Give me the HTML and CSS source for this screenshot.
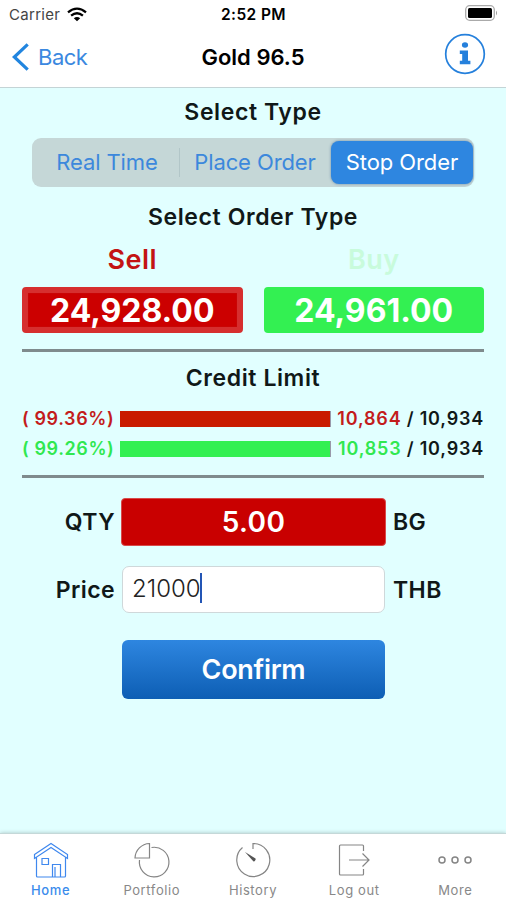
FILE: index.html
```html
<!DOCTYPE html>
<html lang="en">
<head>
<meta charset="utf-8">
<title>Gold 96.5</title>
<link rel="stylesheet" href="styles.css">
</head>
<body>
<div class="app">
  <header class="top">
    <div class="status">
      <div class="carrier"><span>Carrier</span>
        <svg class="wifi" width="20" height="15" viewBox="0 0 20 15" fill="none" stroke="#000" stroke-width="2.3"><path d="M1 5.3Q10-2 19 5.3M4.1 8.7Q10 3.9 15.9 8.7"/><path d="M6.8 11.2Q10 8.6 13.2 11.2L10 14.3Z" fill="#000" stroke="none"/></svg>
      </div>
      <span class="clock">2:52 PM</span>
      <svg class="battery" width="33" height="16" viewBox="0 0 33 16"><rect x=".7" y=".7" width="28.6" height="14.6" rx="4" fill="#fff" stroke="#aaa" stroke-width="1.3"/><rect x="3" y="3" width="24" height="10" rx="1.5"/><path d="M31 5.5q2 2.5 0 5z" fill="#999"/></svg>
    </div>
    <nav class="nav">
      <div class="back">
        <svg width="17" height="28" viewBox="0 0 17 28" fill="none" stroke="#2185df" stroke-width="3.2"><path d="M15.7 1.3 2.3 14 15.7 26.7"/></svg>
        <span>Back</span>
      </div>
      <h1>Gold 96.5</h1>
      <svg class="info" width="42" height="42" viewBox="0 0 42 42"><circle cx="21" cy="21" r="19.3" fill="none" stroke="#2580dc" stroke-width="1.7"/><g fill="#2580dc"><ellipse cx="21" cy="12" rx="3.1" ry="2.7"/><path d="M15.8 17.5H24v10.3h2.4v3.4H15.8v-3.4h2.4v-6.9h-2.4z"/></g></svg>
    </nav>
  </header>
  <main>
    <h2 class="type-title">Select Type</h2>
    <div class="segments">
      <span class="segment">Real Time</span>
      <span class="segment divided">Place Order</span>
      <span class="segment active">Stop Order</span>
    </div>
    <h2 class="order-title">Select Order Type</h2>
    <section class="quotes">
      <div class="quote sell"><h3>Sell</h3><div class="amount">24,928.00</div></div>
      <div class="quote buy"><h3>Buy</h3><div class="amount">24,961.00</div></div>
    </section>
    <section class="credit">
      <h2>Credit Limit</h2>
      <div class="limit red"><span class="percent">( 99.36%)</span><span class="bar"></span><span class="total"><b>10,864</b> / 10,934</span></div>
      <div class="limit green"><span class="percent">( 99.26%)</span><span class="bar"></span><span class="total"><b>10,853</b> / 10,934</span></div>
    </section>
    <form class="order">
      <label>QTY</label><div class="qty">5.00</div><span class="unit">BG</span>
      <label>Price</label><div class="price"><span>21000</span><i class="caret"></i></div><span class="unit">THB</span>
      <button type="button">Confirm</button>
    </form>
  </main>
  <footer class="tabs">
    <div class="tab selected">
      <svg width="38" height="38" viewBox="0 0 38 38"><path d="M2.5 13.5 19 2.5l16.5 11v4L19 6.5l-16.5 11zM4.5 16.500V35q0 1 1 1h27q1 0 1-1V16.500M20.500 36V23.500h8V36M23 36V26M10 17.500h6.500v6H10z"/></svg>
      <span>Home</span>
    </div>
    <div class="tab">
      <svg width="38" height="38" viewBox="0 0 38 38"><path d="M16.500 2.500v14.500H2A15 15 0 0 1 16.500 2.500zM18.500 6.500A14.800 14.800 0 1 1 6.500 19"/></svg>
      <span>Portfolio</span>
    </div>
    <div class="tab">
      <svg width="38" height="38" viewBox="0 0 38 38"><path d="M19 8V2.500A16.500 16.500 0 1 1 8.500 6.500"/><path class="hand" d="m11 11 10.500 6.500q.5 2.500-2 3z"/></svg>
      <span>History</span>
    </div>
    <div class="tab">
      <svg width="38" height="38" viewBox="0 0 38 38"><path d="M28.500 10V5q0-1-1-1h-22q-1 0-1 1v28q0 1 1 1h22q1 0 1-1v-5M14 19h20M27.500 12.500 34 19l-6.500 6.500"/></svg>
      <span>Log out</span>
    </div>
    <div class="tab">
      <svg width="38" height="38" viewBox="0 0 38 38"><g class="dots"><circle cx="6" cy="19" r="3"/><circle cx="19" cy="19" r="3"/><circle cx="32" cy="19" r="3"/></g></svg>
      <span>More</span>
    </div>
  </footer>
</div>
</body>
</html>
```
FILE: styles.css
```css
* { box-sizing: border-box; }
body { margin: 0; font-family: Inter, "Liberation Sans", sans-serif; color: #101818; }
h1, h2, h3 { margin: 0; font-weight: 600; white-space: nowrap; text-align: center; }
svg { display: block; flex: none; }
.app { width: 506px; height: 900px; display: flex; flex-direction: column; background: #e1ffff; overflow: hidden; }

.top { height: 88px; background: #fff; border-bottom: 1px solid #c4d4d6; color: #000; }
.status { height: 28px; display: grid; grid-template-columns: 1fr auto 1fr; align-items: center; padding: 0 8px 0 9px; }
.carrier { display: flex; align-items: center; gap: 7px; font-size: 15px; letter-spacing: .3px; color: #444; }
.clock { font-size: 15.5px; font-weight: 600; letter-spacing: .4px; }
.battery { justify-self: end; margin-top: -2px; }
.nav { height: 59px; display: grid; grid-template-columns: 1fr auto 1fr; align-items: center; padding: 0 20px; }
.back { display: flex; align-items: center; gap: 9px; margin-left: -8px; margin-top: -1px; font-size: 22px; letter-spacing: -.5px; color: #3b88e0; }
.nav h1 { font-size: 22px; margin-top: -1px; }
.info { justify-self: end; margin-top: -7px; }

main { flex: 1; padding: 0 22px; }
h2 { font-size: 23px; line-height: 28px; letter-spacing: .6px; }
.type-title { padding-top: 10px; }
.segments { height: 49px; margin: 12px 10px 0; display: grid; grid-template-columns: 144px 152px 1fr; padding: 3px 1px 3px 3px; background: #c5d7d7; border-radius: 9px; }
.segment { display: flex; align-items: center; justify-content: center; font-size: 22px; letter-spacing: -.1px; color: #3c88dc; white-space: nowrap; padding-bottom: 1px; }
.segment.divided { position: relative; }
.segment.divided::before { content: ""; position: absolute; left: 0; top: 7px; bottom: 7px; width: 1px; background: #b2c6c8; }
.segment.active { background: #2e86e0; color: #fff; border-radius: 8px; box-shadow: 0 0 3px #6b8ba8; }
.order-title { margin-top: 16px; }
.quotes { display: grid; grid-template-columns: 1fr 1fr; gap: 21px; margin-top: 11px; padding-bottom: 16px; border-bottom: 3px solid #7f8b8d; }
.quote h3 { font-size: 27px; line-height: 34px; padding-top: 1px; letter-spacing: .4px; }
.sell h3 { color: #c31414; }
.buy h3 { color: #c8fbdc; }
.amount { height: 46px; margin-top: 10px; display: flex; align-items: center; justify-content: center; border-radius: 4px; font-size: 32px; font-weight: 700; color: #fff; }
.sell .amount { background: #c00; border: 6px solid #d62f2f; box-shadow: inset 0 0 1px #a33; }
.buy .amount { background: #33f052; }

.credit { height: 126px; padding-top: 12px; border-bottom: 3px solid #7f8b8d; }
.limit { display: grid; grid-template-columns: 98px 211px 1fr; align-items: center; height: 30px; font-size: 18px; font-weight: 600; letter-spacing: .6px; white-space: nowrap; }
.limit span:not(.bar) { margin-top: -2px; }
.credit h2 { margin-bottom: 12px; }
.bar { height: 16px; background: #c91b00; border-right: 1px solid #99a; }
.green .bar { background: #33f052; }
.total { text-align: right; letter-spacing: .8px; }
.total b { font-weight: 600; }
.red .percent, .red b { color: #c31c1c; }
.green .percent, .green b { color: #30e850; }

.order { display: grid; grid-template-columns: 93px 265px 1fr; column-gap: 6px; align-items: center; margin-top: 20px; font-size: 23px; font-weight: 600; letter-spacing: .4px; grid-template-rows: 48px 48px 59px; row-gap: 20px; }
.order label { text-align: right; }
.unit { padding-left: 1px; }
.qty { height: 48px; display: flex; align-items: center; justify-content: center; background: #c90000; border: 1px solid #d84a4a; border-radius: 4px; color: #fff; font-size: 28px; }
.price { height: 47px; margin: -1px 1px 0; padding: 0 0 3px 9px; display: flex; align-items: center; border: 1px solid #cfd8da; border-radius: 7px; background: #fff; color: #222; font-size: 24px; font-weight: 300; letter-spacing: 0; }
.caret { width: 2px; height: 30px; margin-left: -1px; background: #2355b5; }
.order button { grid-column: 2; align-self: stretch; margin: 6px 1px -6px; padding: 0; border: 0; border-radius: 6px; background: linear-gradient(#2e86e0, #0d5eb4); color: #fff; font: 600 27px Inter, sans-serif; letter-spacing: -.3px; }

.tabs { height: 67px; display: grid; grid-template-columns: repeat(5, 1fr); background: #fff; border-top: 1px solid #c4d8d8; box-shadow: 0 0 4px #a9c4c4; }
.tab { display: flex; flex-direction: column; align-items: center; padding-top: 7px; font-size: 13px; letter-spacing: .6px; color: #888; }
.tab svg { fill: none; stroke: #858585; stroke-width: 1.2; }
.tab span { line-height: 16px; margin-top: 3px; white-space: nowrap; }
.tab .hand { fill: #555; stroke: none; }
.tab .dots { stroke-width: 1.5; }
.selected { color: #3b8cec; font-weight: 500; }
.selected svg { stroke: #3f88ee; }
```
